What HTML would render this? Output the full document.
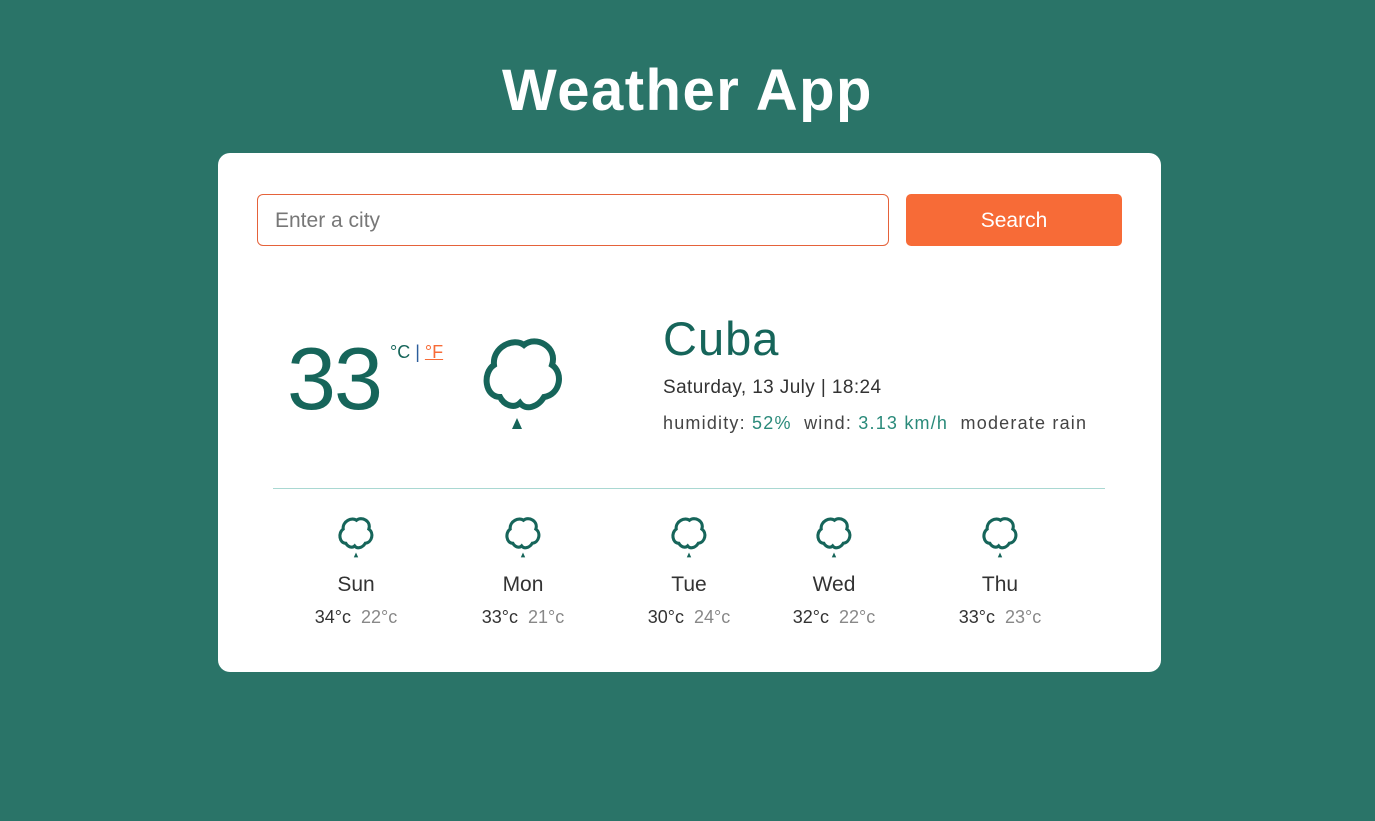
<!DOCTYPE html>
<html><head><meta charset="utf-8"><style>
*{margin:0;padding:0;box-sizing:border-box}
body{width:1375px;height:821px;background:#2a7468;font-family:"Liberation Sans",sans-serif;position:relative;overflow:hidden}
.a{position:absolute;white-space:nowrap}
h1{position:absolute;top:57px;left:0;width:1375px;text-align:center;color:#fff;font-size:58px;font-weight:bold;letter-spacing:1.5px}
.card{position:absolute;left:218px;top:153px;width:943px;height:519px;background:#fff;border-radius:12px}
.inp{position:absolute;left:257px;top:194px;width:632px;height:52px;border:1px solid #e5623a;border-radius:6px;color:#777;font-size:21px;padding:14px 17px}
.btn{position:absolute;left:906px;top:194px;width:216px;height:52px;background:#f76b37;border-radius:5px;color:#fff;font-size:21px;text-align:center;line-height:54px}
.day{position:absolute;width:160px;text-align:center}
.dn{font-size:21px;color:#333;top:573px}
.tp{font-size:18px;color:#333;top:607px}
.tp span{color:#888;margin-left:10px}
</style></head><body>
<h1>Weather App</h1>
<div class="card"></div>
<div class="inp">Enter a city</div>
<div class="btn">Search</div>
<div class="a" style="left:287px;top:328px;font-size:88px;color:#16655a;letter-spacing:-2px">33</div>
<div class="a" style="left:390px;top:342px;font-size:18px;color:#16655a">°C <span style="color:#2c5d9c">|</span> <span style="color:#f76b37;text-decoration:underline">°F</span></div>
<svg class="a" style="left:480px;top:335px" width="86" height="98" viewBox="0 0 86 98">
<path d="M20,62 C5,62 2,38 14,30 C12,12 34,2 44,10 C56,0 78,12 72,30 C84,38 80,60 64,62 C58,72 46,76 40,68 C34,74 24,70 20,62 Z" fill="none" stroke="#16655a" stroke-width="6"/>
<path d="M32,94 L37,83 L42,94 Z" fill="#16655a"/></svg>
<div class="a" style="left:663px;top:311px;font-size:47px;color:#16655a;letter-spacing:1px">Cuba</div>
<div class="a" style="left:663px;top:377px;font-size:19px;color:#333;letter-spacing:0.4px">Saturday, 13 July | 18:24</div>
<div class="a" style="left:663px;top:413px;font-size:18px;color:#444;letter-spacing:1.2px">humidity: <span style="color:#2a8a7a">52%</span>&nbsp; wind: <span style="color:#2a8a7a">3.13 km/h</span>&nbsp; moderate rain</div>
<div class="a" style="left:273px;top:488px;width:832px;height:1px;background:#a9d8d2"></div>
<svg class="a" style="left:337px;top:515px" width="38" height="45" viewBox="0 0 86 98"><path d="M20,62 C5,62 2,38 14,30 C12,12 34,2 44,10 C56,0 78,12 72,30 C84,38 80,60 64,62 C58,72 46,76 40,68 C34,74 24,70 20,62 Z" fill="none" stroke="#16655a" stroke-width="7"/><path d="M38,94 L43,83 L48,94 Z" fill="#16655a"/></svg>
<svg class="a" style="left:504px;top:515px" width="38" height="45" viewBox="0 0 86 98"><path d="M20,62 C5,62 2,38 14,30 C12,12 34,2 44,10 C56,0 78,12 72,30 C84,38 80,60 64,62 C58,72 46,76 40,68 C34,74 24,70 20,62 Z" fill="none" stroke="#16655a" stroke-width="7"/><path d="M38,94 L43,83 L48,94 Z" fill="#16655a"/></svg>
<svg class="a" style="left:670px;top:515px" width="38" height="45" viewBox="0 0 86 98"><path d="M20,62 C5,62 2,38 14,30 C12,12 34,2 44,10 C56,0 78,12 72,30 C84,38 80,60 64,62 C58,72 46,76 40,68 C34,74 24,70 20,62 Z" fill="none" stroke="#16655a" stroke-width="7"/><path d="M38,94 L43,83 L48,94 Z" fill="#16655a"/></svg>
<svg class="a" style="left:815px;top:515px" width="38" height="45" viewBox="0 0 86 98"><path d="M20,62 C5,62 2,38 14,30 C12,12 34,2 44,10 C56,0 78,12 72,30 C84,38 80,60 64,62 C58,72 46,76 40,68 C34,74 24,70 20,62 Z" fill="none" stroke="#16655a" stroke-width="7"/><path d="M38,94 L43,83 L48,94 Z" fill="#16655a"/></svg>
<svg class="a" style="left:981px;top:515px" width="38" height="45" viewBox="0 0 86 98"><path d="M20,62 C5,62 2,38 14,30 C12,12 34,2 44,10 C56,0 78,12 72,30 C84,38 80,60 64,62 C58,72 46,76 40,68 C34,74 24,70 20,62 Z" fill="none" stroke="#16655a" stroke-width="7"/><path d="M38,94 L43,83 L48,94 Z" fill="#16655a"/></svg>
<div class="day dn" style="left:276px">Sun</div><div class="day tp" style="left:276px">34°c<span>22°c</span></div>
<div class="day dn" style="left:443px">Mon</div><div class="day tp" style="left:443px">33°c<span>21°c</span></div>
<div class="day dn" style="left:609px">Tue</div><div class="day tp" style="left:609px">30°c<span>24°c</span></div>
<div class="day dn" style="left:754px">Wed</div><div class="day tp" style="left:754px">32°c<span>22°c</span></div>
<div class="day dn" style="left:920px">Thu</div><div class="day tp" style="left:920px">33°c<span>23°c</span></div>
</body></html>
